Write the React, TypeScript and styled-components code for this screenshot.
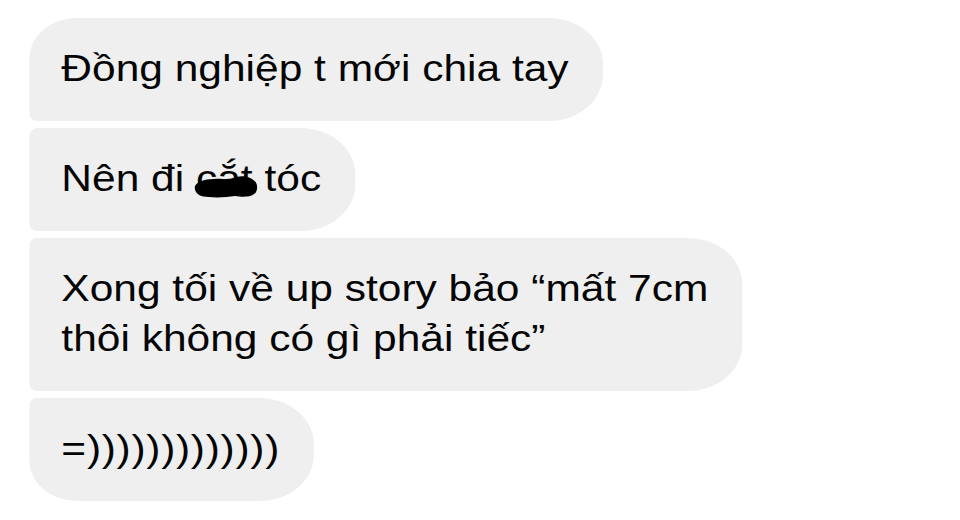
import React from "react";
import styled, { createGlobalStyle } from "styled-components";

const Global = createGlobalStyle`
  html, body { margin: 0; padding: 0; background: #ffffff; }
  body { width: 960px; height: 520px; overflow: hidden; }
`;

/* The source screenshot is stretched horizontally; the whole thread is scaled to match. */
const Thread = styled.div`
  box-sizing: border-box;
  width: 810px;
  display: flex;
  flex-direction: column;
  align-items: flex-start;
  gap: 7px;
  padding: 18px 0 0 25px;
  font-family: "Liberation Sans", Arial, sans-serif;
  transform: scaleX(1.18);
  transform-origin: 0 0;
`;

type Pos = "first" | "middle" | "last";

const Bubble = styled.div<{ $pos: Pos }>`
  background: #efefef;
  color: #050505;
  font-size: 36px;
  line-height: 50px;
  padding: 26px 29px 27px 27px;
  white-space: nowrap;
  border-radius: ${({ $pos }) =>
    $pos === "first"
      ? "40px 46px 46px 7px"
      : $pos === "last"
      ? "7px 46px 46px 40px"
      : "7px 46px 46px 7px"};
`;

const Laugh = styled.span`
  letter-spacing: 0.6px;
`;

const Redacted = styled.span`
  position: relative;
  display: inline-block;
`;

const Scribble = styled.svg`
  position: absolute;
  left: -3px;
  top: 19px;
  width: 56px;
  height: 26px;
`;

export default function App() {
  return (
    <>
      <Global />
      <Thread>
        <Bubble $pos="first">Đồng nghiệp t mới chia tay</Bubble>
        <Bubble $pos="middle">
          Nên đi{" "}
          <Redacted>
            cắt
            <Scribble viewBox="0 0 56 26">
              <path
                d="M2 14 C3 9 10 6 18 6 C24 5 28 7 32 6 C38 3 44 2 49 5 C55 8 56 14 54 19 C51 25 42 24 36 23 C30 24 22 25 14 24 C7 24 2 21 2 14 Z"
                fill="#000"
              />
            </Scribble>
          </Redacted>{" "}
          tóc
        </Bubble>
        <Bubble $pos="middle">
          Xong tối về up story bảo “mất 7cm
          <br />
          thôi không có gì phải tiếc”
        </Bubble>
        <Bubble $pos="last">
          <Laugh>=)))))))))))))</Laugh>
        </Bubble>
      </Thread>
    </>
  );
}
